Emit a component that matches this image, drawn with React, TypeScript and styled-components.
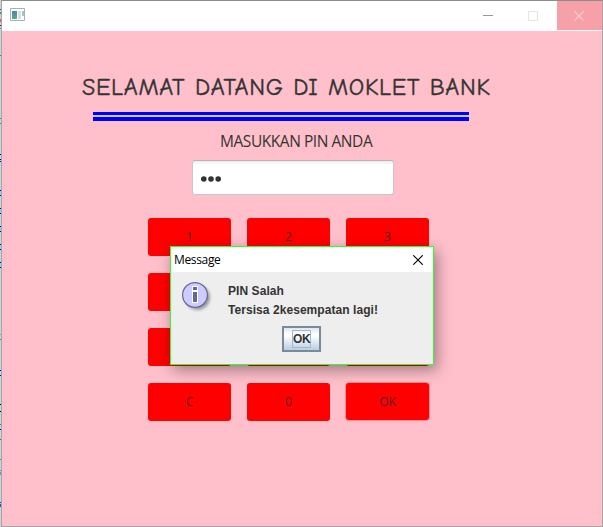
import React from "react";
import styled, { createGlobalStyle } from "styled-components";

const GlobalStyle = createGlobalStyle`
  * { box-sizing: border-box; }
  body { margin: 0; overflow: hidden; }
`;

type Mark = [y: number, height: number, color: string];

/* Slivers of the editor that show at the left edge of the window */
const editorMarks: Mark[] = [
  [9, 1, "#555"], [12, 2, "#777"], [19, 3, "#c66"], [25, 1, "#333"], [28, 1, "#888"],
  [55, 1, "#47a"], [118, 1, "#777"], [123, 1, "#777"], [154, 1, "#00c"], [159, 1, "#009"], [161, 1, "#00c"],
  [190, 1, "#00c"], [191, 4, "#8dd"], [195, 1, "#00c"],
  [208, 1, "#00c"], [209, 4, "#8dd"], [213, 1, "#00c"],
  [226, 1, "#00c"], [227, 4, "#8dd"], [231, 1, "#00c"],
  [244, 1, "#00c"], [245, 4, "#8dd"], [249, 1, "#00c"],
  [262, 1, "#00c"], [263, 4, "#8dd"], [267, 1, "#00c"],
  [334, 1, "#b96"], [339, 1, "#777"], [370, 1, "#00c"], [375, 1, "#00c"],
  [404, 1, "#000"], [411, 1, "#000"], [424, 1, "#66a"], [429, 1, "#00c"],
  [439, 1, "#469"], [459, 1, "#777"], [470, 1, "#888"], [472, 3, "#88c"],
  [502, 1, "#336"], [504, 3, "#44c"],
];

const stripes = editorMarks
  .map(([y, h, c]) => `transparent ${y}px, ${c} ${y}px ${y + h}px, transparent ${y + h}px`)
  .join(", ");

const Desktop = styled.div`
  display: grid;
  grid-template-columns: 1px 602px;
  width: 603px;
  height: 527px;
  position: relative;
  overflow: hidden;
`;

const EditorEdge = styled.div`
  background: linear-gradient(to bottom, ${stripes}), #cdd3d6;
`;

const Window = styled.main`
  display: flex;
  flex-direction: column;
  border: 1px solid #a5a5a5;
  border-top-color: #8c8c8c;
  background: #ffc0cb;
`;

const TitleBar = styled.header`
  display: flex;
  align-items: flex-start;
  height: 30px;
  flex: none;
  background: #fff;
`;

const AppIcon = styled.svg`
  margin: 7px auto 0 8px;
`;

const WindowButton = styled.span<{ $danger?: boolean }>`
  display: flex;
  align-items: center;
  width: 45px;
  height: 29px;
  padding-left: ${(p) => (p.$danger ? 17 : 16)}px;
  background: ${(p) => (p.$danger ? "#f6a1a8" : "transparent")};
`;

const Content = styled.section`
  display: flex;
  flex-direction: column;
  align-items: flex-start;
`;

const Heading = styled.h1`
  margin: 40px 0 0 80px;
  height: 32px;
  font: 400 24px/32px "Comic Sans MS", "Comic Neue", Lato, sans-serif;
  letter-spacing: 0.68px;
  word-spacing: 1px;
  -webkit-text-stroke: 0.4px #333;
  white-space: nowrap;
  color: #333;
`;

const DoubleRule = styled.div`
  width: 376px;
  height: 9px;
  margin: 9px 0 0 91px;
  border: solid #00f;
  border-width: 3px 0 4px;
  background: #c3cbff;
`;

const Prompt = styled.label`
  margin: 9px 0 0 218px;
  height: 22px;
  font: 400 15.5px/22px "Segoe UI", "Open Sans", sans-serif;
  letter-spacing: -0.45px;
  white-space: nowrap;
  color: #333;
`;

const PinField = styled.div`
  display: flex;
  align-items: center;
  gap: 1px;
  width: 202px;
  height: 35px;
  margin: 8px 0 0 190px;
  padding: 2px 0 0 8px;
  border: 1px solid #c8c8c8;
  border-top-color: #b5b5b5;
  border-radius: 3px;
  background: linear-gradient(#ededed, #fff 4px);
`;

const PinDots = styled.svg`
  display: block;
`;

const Keypad = styled.div`
  display: grid;
  grid-template-columns: repeat(3, 83px);
  grid-auto-rows: 38px;
  gap: 17px 16px;
  margin: 23px 0 0 146px;
`;

const Key = styled.button<{ $focused?: boolean }>`
  padding: 0;
  border: 0;
  border-radius: 3px;
  background: #f00;
  color: #542424;
  font: 400 12px/38px "Segoe UI", "Open Sans", sans-serif;
  ${(p) => p.$focused && "box-shadow: 0 0 0 1px #ff8c94; height: 37px; line-height: 37px;"}
`;

const Dialog = styled.section`
  position: absolute;
  left: 170px;
  top: 246px;
  width: 264px;
  height: 119px;
  border: 1px solid #2bff2b;
  background: #eee;
  box-shadow: 3px 5px 14px rgba(0, 0, 0, 0.38);
`;

const DialogBar = styled.header`
  display: flex;
  justify-content: space-between;
  align-items: center;
  height: 25px;
  padding: 0 10px 0 3px;
  background: #fff;
  color: #000;
  font: 400 12px/24px "Segoe UI", "Open Sans", sans-serif;
  letter-spacing: -0.35px;
`;

const DialogBody = styled.div`
  display: flex;
  padding: 9px 0 0 10px;
`;

const Message = styled.p`
  margin: 1px 0 0 14px;
  color: #333;
  font: 700 12px/19px "Liberation Sans", Arial, sans-serif;
  letter-spacing: 0.06px;
  white-space: nowrap;
`;

const ConfirmButton = styled.button`
  display: grid;
  place-items: center;
  width: 39px;
  height: 26px;
  margin: 6px 0 0 111px;
  padding: 0;
  border: 2px solid #7a8a99;
  background: linear-gradient(#dce7f1, #fff 28%, #fff 35%, #b8cfe5);
`;

const FocusLabel = styled.span`
  width: 19px;
  height: 18px;
  border: 1px solid #a3b8cc;
  color: #333;
  font: 700 12px/17px "Liberation Sans", Arial, sans-serif;
  letter-spacing: -0.4px;
`;

function InfoIcon() {
  return (
    <svg width="33" height="33" viewBox="0 0 33 33">
      <defs>
        <filter id="soft" x="-30%" y="-30%" width="160%" height="160%">
          <feGaussianBlur stdDeviation="1.4" />
        </filter>
      </defs>
      <circle cx="16.5" cy="16.5" r="12.5" fill="#999" filter="url(#soft)" />
      <circle cx="14" cy="14" r="12.4" fill="#ccf" stroke="#669" strokeWidth="1.2" />
      <path d="M11 5h6v17h-6z" fill="#fff" />
      <path d="M12 6h4v3h-4zM12 11h4v10h-4z" fill="#669" />
    </svg>
  );
}

function Cross({ size, color }: { size: number; color: string }) {
  return (
    <svg width={size} height={size} viewBox="0 0 10 10">
      <path d="M.3.3l9.4 9.4M9.7.3L.3 9.7" stroke={color} strokeWidth="1.1" />
    </svg>
  );
}

const keys = ["1", "2", "3", "4", "5", "6", "7", "8", "9", "C", "0", "OK"];

export default function App() {
  return (
    <Desktop>
      <GlobalStyle />
      <EditorEdge />
      <Window>
        <TitleBar>
          <AppIcon width="15" height="13" viewBox="0 0 15 13">
            <defs>
              <linearGradient id="pane" x1="0" y1="0" x2="0" y2="1">
                <stop offset="0" stopColor="#4a84ad" />
                <stop offset="1" stopColor="#55ad85" />
              </linearGradient>
            </defs>
            <path d="M.5.5h14v12H.5z" fill="#fff" stroke="#a9b0b3" />
            <path d="M2 3h5v8H2z" fill="url(#pane)" />
            <path d="M8 3h3v8H8z" fill="#ddd" />
            <path d="M12 3h2v5h-2z" fill="#9ccbb9" />
          </AppIcon>
          <WindowButton>
            <svg width="10" height="1"><path d="M0 .5h10" stroke="#999" /></svg>
          </WindowButton>
          <WindowButton>
            <svg width="10" height="10"><path d="M.5.5h9v9h-9z" fill="none" stroke="#e5e5e5" /></svg>
          </WindowButton>
          <WindowButton $danger><Cross size={10} color="#ffd0d4" /></WindowButton>
        </TitleBar>
        <Content>
          <Heading>SELAMAT DATANG DI MOKLET BANK</Heading>
          <DoubleRule />
          <Prompt>MASUKKAN PIN ANDA</Prompt>
          <PinField>
            <PinDots width="22" height="6" viewBox="0 0 22 6" fill="#333">
              <circle cx="2.8" cy="3" r="2.8" />
              <circle cx="10" cy="3" r="2.8" />
              <circle cx="17.2" cy="3" r="2.8" />
            </PinDots>
          </PinField>
          <Keypad>
            {keys.map((k) => <Key key={k} $focused={k === "OK"}>{k}</Key>)}
          </Keypad>
        </Content>
      </Window>
      <Dialog role="dialog">
        <DialogBar>
          Message
          <Cross size={10} color="#000" />
        </DialogBar>
        <DialogBody>
          <InfoIcon />
          <Message>PIN Salah<br />Tersisa 2kesempatan lagi!</Message>
        </DialogBody>
        <ConfirmButton><FocusLabel>OK</FocusLabel></ConfirmButton>
      </Dialog>
    </Desktop>
  );
}
